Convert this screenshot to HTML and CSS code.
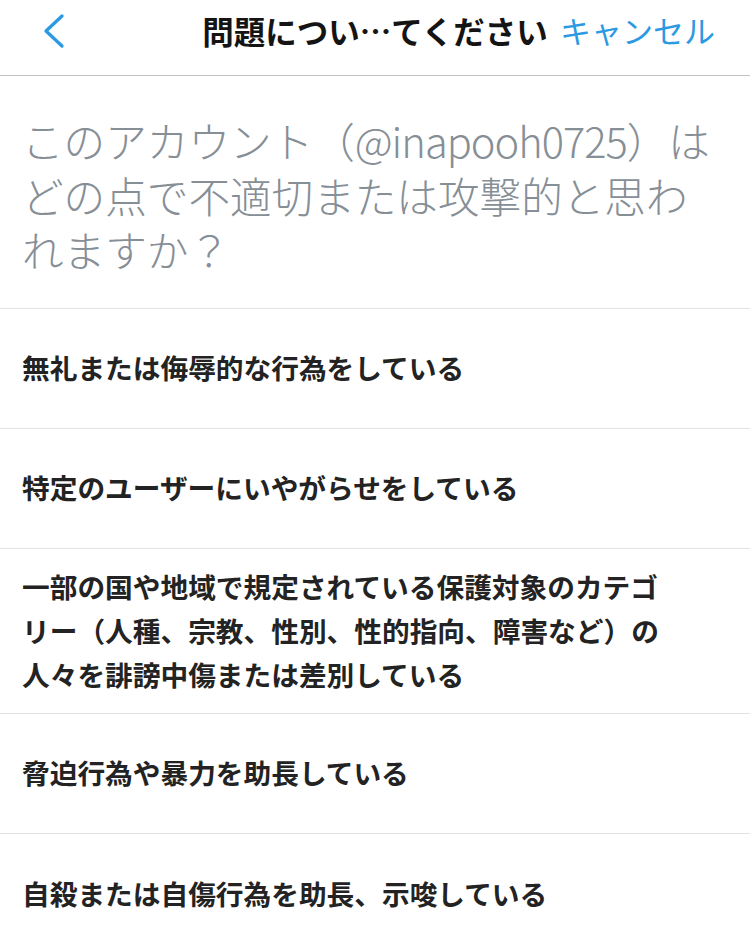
FILE: index.html
```html
<!DOCTYPE html>
<html lang="ja">
<head>
<meta charset="utf-8">
<title>問題について</title>
<link rel="stylesheet" href="styles.css">
</head>
<body>
<header class="nav">
  <div class="nav-left">
    <svg class="back" width="26" height="36" viewBox="0 0 26 36" aria-hidden="true">
      <polyline points="21,3 5,18 21,33" fill="none" stroke="#2b9ae3" stroke-width="3.3" stroke-linecap="round" stroke-linejoin="round"/>
    </svg>
  </div>
  <div class="nav-title">問題につい…てください</div>
  <div class="nav-right"><span class="cancel">キャンセル</span></div>
</header>
<section class="question">このアカウント（<span class="latin">@inapooh0725</span>）は<br>どの点で不適切または攻撃的と思わ<br>れますか？</section>
<ul class="options">
  <li class="item"><span>無礼または侮辱的な行為をしている</span></li>
  <li class="item"><span>特定のユーザーにいやがらせをしている</span></li>
  <li class="item"><span>一部の国や地域で規定されている保護対象のカテゴ<br>リー（人種、宗教、性別、性的指向、障害など）の<br>人々を誹謗中傷または差別している</span></li>
  <li class="item"><span>脅迫行為や暴力を助長している</span></li>
  <li class="item"><span>自殺または自傷行為を助長、示唆している</span></li>
</ul>
</body>
</html>
```

FILE: styles.css
```css
html, body {
  margin: 0;
  padding: 0;
  background: #ffffff;
}
body {
  font-family: "Noto Sans CJK JP", "Noto Sans", sans-serif;
  width: 750px;
  overflow: hidden;
}
.nav {
  display: grid;
  grid-template-columns: 1fr auto 1fr;
  align-items: start;
  height: 76px;
  box-sizing: border-box;
  border-bottom: 1px solid #c3c3c6;
}
.nav-left {
  padding-left: 41px;
  padding-top: 13px;
}
.back {
  display: block;
}
.nav-title {
  font-size: 31.5px;
  font-weight: 700;
  color: #141414;
  line-height: 40px;
  padding-top: 10px;
  white-space: nowrap;
}
.nav-right {
  display: flex;
  justify-content: flex-end;
  padding-right: 35px;
  padding-top: 10px;
}
.cancel {
  font-size: 31px;
  line-height: 40px;
  color: #2b9ae3;
  white-space: nowrap;
}
.question {
  font-size: 41.6px;
  font-weight: 300;
  line-height: 54.5px;
  color: #868e96;
  padding: 37px 22px 31px;
  white-space: nowrap;
  border-bottom: 1px solid #e3e3e5;
}
.latin {
  letter-spacing: -1px;
}
.options {
  list-style: none;
  margin: 0;
  padding: 0;
}
.item {
  display: flex;
  align-items: center;
  box-sizing: border-box;
  min-height: 120px;
  padding: 15px 22px 17px;
  border-bottom: 1px solid #e3e3e5;
  font-size: 27.7px;
  font-weight: 700;
  line-height: 44px;
  color: #232323;
  white-space: nowrap;
}
.item:last-child {
  border-bottom: none;
}
```
